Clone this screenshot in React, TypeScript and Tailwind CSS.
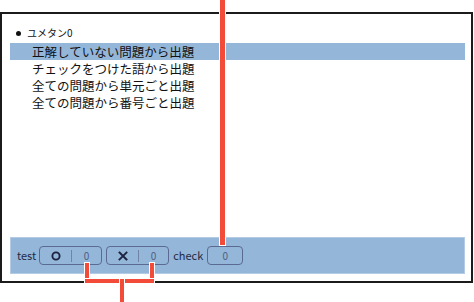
import React from 'react';

const modes = [
  '正解していない問題から出題',
  'チェックをつけた語から出題',
  '全ての問題から単元ごと出題',
  '全ての問題から番号ごと出題',
];

// 赤い注釈線（白い縁取り付き）
function Callout({ className }: { className: string }) {
  return <div className={`absolute bg-[#f24b3a] ring-1 ring-white ${className}`} />;
}

function CircleMark() {
  return (
    <svg width="10" height="10" viewBox="0 0 10 10">
      <circle cx="5" cy="5" r="3.6" fill="none" stroke="#1c2440" strokeWidth="1.9" />
    </svg>
  );
}

function CrossMark() {
  return (
    <svg width="10" height="10" viewBox="0 0 10 10">
      <path d="M1.5 1.5 L8.5 8.5 M8.5 1.5 L1.5 8.5" stroke="#1c2440" strokeWidth="1.9" strokeLinecap="square" />
    </svg>
  );
}

function ScoreBox({ icon }: { icon: React.ReactNode }) {
  return (
    <div className="flex h-[19px] w-[63px] items-center rounded-[4px] border border-[#5b6a90]">
      <div className="flex w-[31px] items-center justify-center">{icon}</div>
      <div className="h-[12px] w-px bg-[#7283a6]" />
      <div className="flex flex-1 items-center justify-center text-[10px] leading-[12px] text-[#4f5e80]">0</div>
    </div>
  );
}

export default function App() {
  return (
    <div
      className="relative h-[302px] w-[474px] overflow-hidden bg-white"
      style={{ fontFamily: '"Noto Sans CJK JP", "Noto Sans", sans-serif' }}
    >
      {/* ウィンドウ本体 */}
      <div className="mt-[12px] flex h-[271px] w-[473px] flex-col border-2 border-[#1b1b1b] bg-white pl-[8px] pr-[6px] pb-[7px] pt-[12px]">
        <div className="flex h-[14px] items-center gap-[6px] pl-[6px] text-[10px] leading-[14px] text-[#111]">
          <div className="h-[5px] w-[5px] rounded-full bg-[#111]" />
          <span>ユメタン0</span>
        </div>

        <div className="mt-[3px] flex flex-col">
          {modes.map((m, i) => (
            <div
              key={m}
              className={`h-[17px] overflow-hidden pl-[22px] text-[12.5px] leading-[17px] text-[#111] ${i === 0 ? 'bg-[#94b6d9]' : ''}`}
            >
              {m}
            </div>
          ))}
        </div>

        {/* 下部バー */}
        <div className="mt-auto flex h-[37px] items-center gap-[4px] border border-[#b3cbe5] bg-[#94b6d9] pl-[6px] text-[11px] text-[#1f2a44]">
          <span className="mr-[-1px]">test</span>
          <ScoreBox icon={<CircleMark />} />
          <ScoreBox icon={<CrossMark />} />
          <span>check</span>
          <div className="flex h-[19px] w-[36px] items-center justify-center rounded-[4px] border border-[#5b6a90] text-[10px] leading-[12px] text-[#4f5e80]">
            0
          </div>
        </div>
      </div>

      {/* 注釈線 */}
      <Callout className="left-[220px] top-0 h-[245px] w-[5px]" />
      <Callout className="left-[85px] top-[263px] h-[20px] w-[4px]" />
      <Callout className="left-[150px] top-[263px] h-[20px] w-[4px]" />
      <Callout className="left-[85px] top-[279px] h-[4px] w-[69px]" />
      <Callout className="left-[120px] top-[279px] h-[23px] w-[4px]" />
    </div>
  );
}
